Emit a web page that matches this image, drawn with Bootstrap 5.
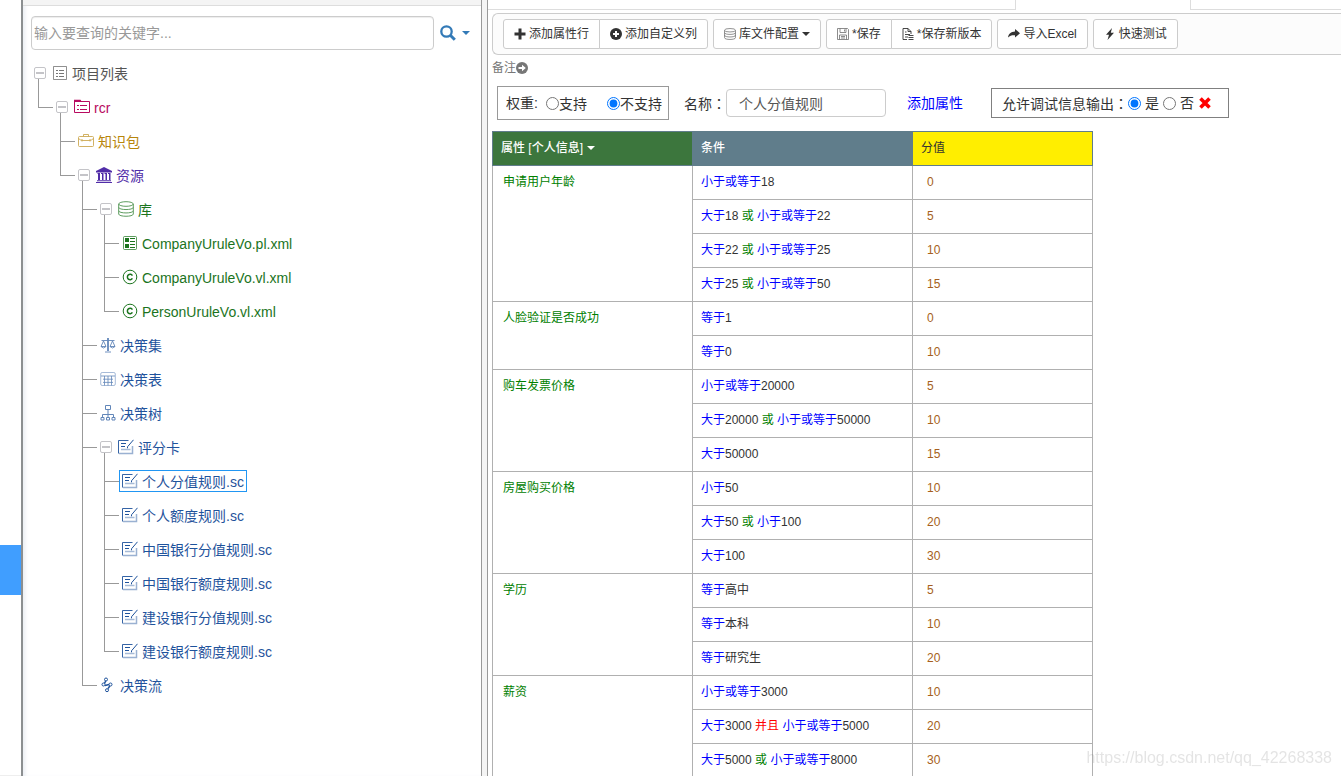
<!DOCTYPE html>
<html lang="zh-CN">
<head>
<meta charset="utf-8">
<meta name="viewport" content="width=device-width, initial-scale=1">
<title>个人分值规则</title>
<link href="https://cdn.jsdelivr.net/npm/bootstrap@5.3.0/dist/css/bootstrap.min.css" rel="stylesheet">
<style>
  body { font-family: "Liberation Sans", "Noto Sans CJK SC", sans-serif; font-size: 14px; line-height: 20px; color: #333; background: #fff; }
  svg { display: block; flex: none; }
  .ic { width: 16px; height: 16px; fill: none; stroke: currentColor; stroke-width: 1; }
  .ic-sm { width: 12px; height: 12px; fill: none; stroke: currentColor; stroke-width: 1; }
  .tri { width: 8px; height: 4px; fill: currentColor; }
  .soft { opacity: .7; }
  .colon { font-family: "Noto Sans CJK TC", sans-serif; }

  /* outer navigation strip */
  .rail { width: 21px; flex: none; padding-top: 545px; border-bottom: 1px solid #eee; }
  .rail-active { height: 50px; background: #409eff; }

  /* project tree pane */
  .side { width: 460px; flex: none; border-left: 2px solid #8c8f91; box-shadow: inset 4px 0 4px -2px #e9ecf2; }
  .side-head { height: 6px; background: #f4f4f4; border-bottom: 1px solid #ddd; }
  .search { padding: 10px 11px 0 8px; gap: 6px; }
  .search .form-control { height: 34px; padding: 6px 2px; font-size: 14px; line-height: 20px; border-color: #ccc; border-radius: 4px; box-shadow: inset 0 1px 1px rgba(0,0,0,.075); }
  .search .form-control::placeholder { color: #999; }
  .search-btn { color: #337ab7; gap: 6px; }
  .tree, .tree ul { list-style: none; margin: 0; padding: 0; }
  .tree { padding: 6px 0 0 11px; }
  .tree ul { padding-left: 22px; }
  .tree li { position: relative; }
  .node { height: 34px; display: flex; align-items: center; gap: 6px; }
  .node a { display: flex; align-items: flex-start; gap: 4px; height: 16px; line-height: 18px; color: inherit; text-decoration: none; white-space: nowrap; }
  .node a.chosen { outline: 1px solid #2196f3; outline-offset: 2px; }
  .fold { width: 12px; height: 12px; padding: 0; border: 1px solid #c4c4c8; border-radius: 2px; background: #fff; display: flex; align-items: center; justify-content: center; position: relative; z-index: 1; }
  .fold::before { content: ""; width: 8px; height: 2px; background: #c4c4c8; }
  /* connector lines between parent and children */
  .tree ul > li::before { content: ""; position: absolute; left: -18px; top: -11px; width: 15px; height: 29px; border-left: 1px solid #999; border-bottom: 1px solid #999; }
  .tree ul > li:not(:last-child)::after { content: ""; position: absolute; left: -18px; top: 0; bottom: 0; border-left: 1px solid #999; }
  .c-root { color: #555; } .c-proj { color: #b80a60; } .c-pack { color: #b8860b; } .c-res { color: #512da8; }
  .c-lib { color: #1b741d; } .c-rule { color: #1f539c; }

  .splitter { width: 7px; flex: none; background: #f4f4f4; border-left: 1px solid #999; border-right: 1px solid #999; }

  /* editor */
  .tabs { height: 10px; }
  .tab-a { flex: 0 0 528px; border-right: 1px solid #ddd; border-bottom: 1px solid #ddd; }
  .tab-b { flex: 0 0 174px; }
  .tab-c { flex: 1; border-left: 1px solid #ddd; border-bottom: 1px solid #ddd; }
  .tools { margin: 3px 0 0 4px; padding: 5px 10px; gap: 5px; height: 42px; border: 1px solid #ccc; border-right: 0; border-radius: 6px 0 0 6px; background: #fcfcfc; }
  .tools .btn { --bs-btn-border-color: #ccc; --bs-btn-bg: #fff; --bs-btn-color: #333; --bs-btn-hover-bg: #e6e6e6; --bs-btn-hover-border-color: #adadad; --bs-btn-hover-color: #333; height: 30px; padding: 0 10px; font-size: 12px; line-height: 18px; border-radius: 3px; display: flex; align-items: center; gap: 3px; white-space: nowrap; }
  .note { margin: 4px 0 0 4px; height: 18px; line-height: 18px; font-size: 12px; color: #777; }
  .props { margin: 9px 0 0 9px; white-space: nowrap; }
  .frame { border: 1px solid #999; }
  .frame input { margin: 0; width: 13px; height: 13px; }
  .frame-w { width: 172px; height: 34px; padding: 0 8px; }
  .frame-w label { padding-top: 2px; }
  .frame-d { width: 238px; height: 30px; padding: 0 10px; border-color: #808080; margin-left: 28px; }
  .frame-d label { margin: 0 4px; }
  .name-label { margin-left: 15px; }
  .name-in { width: 160px; height: 28px; padding: 4px 12px; font-size: 14px; line-height: 20px; color: #555; border-color: #ccc; border-radius: 4px; }
  .add-link { color: #00f; text-decoration: none; margin-left: 21px; }
  .drop { color: red; margin-left: 1px; }

  .grid-wrap { margin: 11px 0 0 4px; }
  .score { width: 601px; table-layout: fixed; border-collapse: collapse; font-size: 12px; line-height: 18px; }
  .score th, .score td { height: 34px; padding: 7px 8px 8px; border: 1px solid #b0b0b0; vertical-align: top; font-weight: 400; }
  .score th { border-color: #607d8b; color: #fff; }
  .score .h-attr { background: #3c763d; font-weight: 500; } .score .h-cond { background: #607d8b; font-weight: 500; } .score .h-val { background: #ffee00; color: #333; }
  .score td.attr { padding-left: 10px; color: green; }
  .score td.val { padding-left: 14px; color: #a65f20; }
  .score b { font-weight: 400; color: #00f; }
  .score i { font-style: normal; color: green; }
  .score i.and { color: red; }

  .stamp { position: fixed; right: 9px; bottom: 8px; font-size: 16px; line-height: 20px; color: rgba(120,120,120,.2); pointer-events: none; }
</style>
</head>
<body>
<svg class="d-none" aria-hidden="true">
  <symbol id="i-list" viewBox="0 0 16 16"><path d="M1.500 1.500h13v13h-13z" opacity=".65"/><path d="M4 5.500h2M4 8.500h2M4 11.500h2M7 5.500h5M7 8.500h5M7 11.500h5" opacity=".8"/></symbol>
  <symbol id="i-proj" viewBox="0 0 16 16"><path d="M.5 13.500v-11h15v11z"/><path d="M0 3V.8h6.500L8 3z" fill="currentColor" stroke="none"/><path d="M3 6.500h2M3 10.500h2M6 6.500h7M6 10.500h7"/></symbol>
  <symbol id="i-case" viewBox="0 0 16 16"><path d="M.5 4.500q0-1 1-1h13q1 0 1 1v8q0 1-1 1h-13q-1 0-1-1zM5.500 3.500v-2h5v2M.5 5.500Q3 7.500 4 7.500h8q1 0 3.500-2M4 6v2.500M12 6v2.500" stroke-width=".9"/></symbol>
  <symbol id="i-bank" viewBox="0 0 16 16"><path d="M8 0 16 4v1.500H0V4zM1.500 6h2.500v7H2V7h-.5zM5 6h2.500v7h-1.500V7H5zM8.500 6H11v7H9.500V7h-1zM12 6h2.500v7H13V7h-1zM1 13.300h14v1H1zM0 15h16v1H0z" fill="currentColor" stroke="none"/></symbol>
  <symbol id="i-db" viewBox="0 0 16 16"><ellipse cx="8" cy="3" rx="7.300" ry="2.300"/><path d="M.7 3v10c0 3 14.600 3 14.600 0V3M.7 6.300c0 3 14.600 3 14.600 0M.7 9.700c0 3 14.600 3 14.600 0"/></symbol>
  <symbol id="i-pl" viewBox="0 0 16 16"><rect x="1.500" y="1.500" width="13" height="13" rx="1" opacity=".7"/><path d="M3 3h4v4H3zM3 9h4v4H3z" fill="currentColor" stroke="none"/><path d="M8 3.500h5M8 6.500h5M8 9.500h5M8 12.500h5"/></symbol>
  <symbol id="i-copy" viewBox="0 0 16 16"><circle cx="8" cy="8" r="6.800"/><path d="M10.400 6.600A2.700 2.700 0 1 0 10.400 9.400" stroke-width="1.500"/></symbol>
  <symbol id="i-scale" viewBox="0 0 16 16"><path d="M1.500 3.500h13M7.500 1v13M8.500 1v13M5 15h6M3.500 4 1 9.500h5zM12.500 4 10 9.500h5zM1 9.500q2.500 3 5 0M10 9.500q2.500 3 5 0" stroke-width=".9"/></symbol>
  <symbol id="i-table" viewBox="0 0 16 16"><g stroke-width=".8"><rect x=".7" y="1.500" width="14.600" height="13" rx="1.500" opacity=".7"/><path d="M1 5h14M3 8.200h10M3 11.400h10M4.500 5v9.500M8 5v9.500M11.500 5v9.500"/></g></symbol>
  <symbol id="i-org" viewBox="0 0 16 16"><path d="M5.500.5h5v4h-5zM8 4.500V12M2.500 12V9.500h11V12M1 12.500h3v2.500H1zM6.500 12.500h3v2.500h-3zM12 12.500h3v2.500h-3z"/></symbol>
  <symbol id="i-card" viewBox="0 0 16 16"><path d="M10.500 1.500h-10v13" opacity=".9"/><path d="M1 14.500h13.500V7" stroke-width="1.500" opacity=".45"/><path d="M15.500.8 9.500 7.800v1.500M3 4.500h5M3 7.500h4"/><path d="M3 10.500h9.500" stroke-width="1.500" opacity=".4"/></symbol>
  <symbol id="i-flow" viewBox="0 0 16 16"><circle cx="6" cy="2.500" r="1.500"/><circle cx="3.500" cy="7.500" r="1.500"/><circle cx="10.500" cy="7.500" r="1.500"/><circle cx="7" cy="13.200" r="1.500"/><path d="M5.700 4 4.500 6.300M5 8.500 9 7.500M9.800 9 8 11.700" stroke-width="1.500"/></symbol>
  <symbol id="i-find" viewBox="0 0 16 16"><circle cx="6.500" cy="6.500" r="5.200" stroke-width="2.300"/><path d="m10.300 10.300 4.500 4.500" stroke-width="3"/></symbol>
  <symbol id="i-tri" viewBox="0 0 8 4"><path d="M0 0h8L4 4z"/></symbol>
  <symbol id="i-plus" viewBox="0 0 12 12"><path d="M6 .5v11M.5 6h11" stroke-width="3"/></symbol>
  <symbol id="i-pluso" viewBox="0 0 12 12"><circle cx="6" cy="6" r="6" fill="currentColor" stroke="none"/><path d="M6 3v6M3 6h6" stroke="#fff" stroke-width="2"/></symbol>
  <symbol id="i-save" viewBox="0 0 12 12"><path d="M.5.500h10l1 1v10H.5zM3 .5v4h6v-4M2.500 11.500V7h7v4.500M4 8.500h4M4 10h4M7.500 1.500v2" stroke-width=".8"/></symbol>
  <symbol id="i-new" viewBox="0 0 12 12"><path d="M5 11.500H1V.5h5l3 3V6M6 .5v3h3M3 4h1.500M3 6.500h5M3 9h3M6.500 7.500h5M6.500 9.500h5M6.500 11.500h5" stroke-width=".9"/></symbol>
  <symbol id="i-share" viewBox="0 0 12 12"><path d="M7 1 12 5.200 7 9.500V7.200C4 7 2 7.500 0 9.500 .5 5.500 3 3.600 7 3.400z" fill="currentColor" stroke="none"/></symbol>
  <symbol id="i-bolt" viewBox="0 0 12 12"><path d="M8 0 2 6.800h3L3.500 12 10 4.800H6.800z" fill="currentColor" stroke="none"/></symbol>
  <symbol id="i-next" viewBox="0 0 12 12"><circle cx="6" cy="6" r="6" fill="currentColor" stroke="none"/><path d="M2.500 5h3.500V2.800L9.800 6 6 9.200V7H2.500z" fill="#fff" stroke="none"/></symbol>
  <symbol id="i-x" viewBox="0 0 12 12"><path d="m1.500 1.500 9 9M10.500 1.500l-9 9" stroke-width="3.600"/></symbol>
</svg>

<div class="d-flex vh-100 overflow-hidden">
  <nav class="rail"><div class="rail-active"></div></nav>

  <aside class="side">
    <div class="side-head"></div>
    <form class="search d-flex align-items-center">
      <input type="text" class="form-control flex-grow-1" placeholder="输入要查询的关键字..." aria-label="输入要查询的关键字">
      <button type="button" class="btn p-0 border-0 d-flex align-items-center search-btn" aria-label="查询"><svg class="ic"><use href="#i-find"/></svg><svg class="tri"><use href="#i-tri"/></svg></button>
    </form>
    <ul class="tree">
      <li>
        <div class="node c-root"><button class="fold" aria-label="折叠"></button><a href="#"><svg class="ic"><use href="#i-list"/></svg>项目列表</a></div>
        <ul>
          <li>
            <div class="node c-proj"><button class="fold" aria-label="折叠"></button><a href="#"><svg class="ic"><use href="#i-proj"/></svg>rcr</a></div>
            <ul>
              <li><div class="node c-pack"><a href="#"><svg class="ic soft"><use href="#i-case"/></svg>知识包</a></div></li>
              <li>
                <div class="node c-res"><button class="fold" aria-label="折叠"></button><a href="#"><svg class="ic"><use href="#i-bank"/></svg>资源</a></div>
                <ul>
                  <li>
                    <div class="node c-lib"><button class="fold" aria-label="折叠"></button><a href="#"><svg class="ic soft"><use href="#i-db"/></svg>库</a></div>
                    <ul>
                      <li><div class="node c-lib"><a href="#"><svg class="ic"><use href="#i-pl"/></svg>CompanyUruleVo.pl.xml</a></div></li>
                      <li><div class="node c-lib"><a href="#"><svg class="ic"><use href="#i-copy"/></svg>CompanyUruleVo.vl.xml</a></div></li>
                      <li><div class="node c-lib"><a href="#"><svg class="ic"><use href="#i-copy"/></svg>PersonUruleVo.vl.xml</a></div></li>
                    </ul>
                  </li>
                  <li><div class="node c-rule"><a href="#"><svg class="ic soft"><use href="#i-scale"/></svg>决策集</a></div></li>
                  <li><div class="node c-rule"><a href="#"><svg class="ic soft"><use href="#i-table"/></svg>决策表</a></div></li>
                  <li><div class="node c-rule"><a href="#"><svg class="ic soft"><use href="#i-org"/></svg>决策树</a></div></li>
                  <li>
                    <div class="node c-rule"><button class="fold" aria-label="折叠"></button><a href="#"><svg class="ic"><use href="#i-card"/></svg>评分卡</a></div>
                    <ul>
                      <li><div class="node c-rule"><a href="#" class="chosen"><svg class="ic"><use href="#i-card"/></svg>个人分值规则.sc</a></div></li>
                      <li><div class="node c-rule"><a href="#"><svg class="ic"><use href="#i-card"/></svg>个人额度规则.sc</a></div></li>
                      <li><div class="node c-rule"><a href="#"><svg class="ic"><use href="#i-card"/></svg>中国银行分值规则.sc</a></div></li>
                      <li><div class="node c-rule"><a href="#"><svg class="ic"><use href="#i-card"/></svg>中国银行额度规则.sc</a></div></li>
                      <li><div class="node c-rule"><a href="#"><svg class="ic"><use href="#i-card"/></svg>建设银行分值规则.sc</a></div></li>
                      <li><div class="node c-rule"><a href="#"><svg class="ic"><use href="#i-card"/></svg>建设银行额度规则.sc</a></div></li>
                    </ul>
                  </li>
                  <li><div class="node c-rule"><a href="#"><svg class="ic"><use href="#i-flow"/></svg>决策流</a></div></li>
                </ul>
              </li>
            </ul>
          </li>
        </ul>
      </li>
    </ul>
  </aside>

  <div class="splitter"></div>

  <main class="flex-grow-1 overflow-hidden">
    <div class="tabs d-flex"><div class="tab-a"></div><div class="tab-b"></div><div class="tab-c"></div></div>
    <div class="tools d-flex">
      <div class="btn-group">
        <button type="button" class="btn"><svg class="ic-sm"><use href="#i-plus"/></svg>添加属性行</button>
        <button type="button" class="btn"><svg class="ic-sm"><use href="#i-pluso"/></svg>添加自定义列</button>
      </div>
      <button type="button" class="btn"><svg class="ic-sm soft"><use href="#i-db"/></svg>库文件配置<svg class="tri"><use href="#i-tri"/></svg></button>
      <div class="btn-group">
        <button type="button" class="btn"><svg class="ic-sm soft"><use href="#i-save"/></svg>*保存</button>
        <button type="button" class="btn"><svg class="ic-sm"><use href="#i-new"/></svg>*保存新版本</button>
      </div>
      <button type="button" class="btn"><svg class="ic-sm"><use href="#i-share"/></svg>导入Excel</button>
      <button type="button" class="btn"><svg class="ic-sm"><use href="#i-bolt"/></svg>快速测试</button>
    </div>
    <div class="note d-flex align-items-center">备注<svg class="ic-sm"><use href="#i-next"/></svg></div>

    <form class="props d-flex align-items-center">
      <div class="frame frame-w d-flex align-items-center">
        <span class="me-2">权重:</span>
        <input type="radio" name="w" id="w1"><label for="w1" class="me-3 pe-1">支持</label>
        <input type="radio" name="w" id="w2" checked><label for="w2">不支持</label>
      </div>
      <label for="nm" class="name-label">名称<span class="colon" lang="zh-TW">：</span></label>
      <input type="text" id="nm" class="form-control name-in" value="个人分值规则">
      <a href="#" class="add-link">添加属性</a>
      <div class="frame frame-d d-flex align-items-center">
        <span>允许调试信息输出<span class="colon" lang="zh-TW">：</span></span>
        <input type="radio" name="d" id="d1" checked><label for="d1">是</label>
        <input type="radio" name="d" id="d2"><label for="d2">否</label>
        <svg class="ic-sm drop"><use href="#i-x"/></svg>
      </div>
    </form>

    <div class="grid-wrap">
      <table class="score">
        <colgroup><col style="width:200px"><col style="width:220px"><col style="width:180px"></colgroup>
        <thead>
          <tr><th class="h-attr"><div class="d-flex align-items-center gap-1">属性 [个人信息] <svg class="tri"><use href="#i-tri"/></svg></div></th><th class="h-cond">条件</th><th class="h-val">分值</th></tr>
        </thead>
        <tbody>
          <tr><td class="attr" rowspan="4">申请用户年龄</td><td><b>小于或等于</b>18</td><td class="val">0</td></tr>
          <tr><td><b>大于</b>18 <i>或</i> <b>小于或等于</b>22</td><td class="val">5</td></tr>
          <tr><td><b>大于</b>22 <i>或</i> <b>小于或等于</b>25</td><td class="val">10</td></tr>
          <tr><td><b>大于</b>25 <i>或</i> <b>小于或等于</b>50</td><td class="val">15</td></tr>
          <tr><td class="attr" rowspan="2">人脸验证是否成功</td><td><b>等于</b>1</td><td class="val">0</td></tr>
          <tr><td><b>等于</b>0</td><td class="val">10</td></tr>
          <tr><td class="attr" rowspan="3">购车发票价格</td><td><b>小于或等于</b>20000</td><td class="val">5</td></tr>
          <tr><td><b>大于</b>20000 <i>或</i> <b>小于或等于</b>50000</td><td class="val">10</td></tr>
          <tr><td><b>大于</b>50000</td><td class="val">15</td></tr>
          <tr><td class="attr" rowspan="3">房屋购买价格</td><td><b>小于</b>50</td><td class="val">10</td></tr>
          <tr><td><b>大于</b>50 <i>或</i> <b>小于</b>100</td><td class="val">20</td></tr>
          <tr><td><b>大于</b>100</td><td class="val">30</td></tr>
          <tr><td class="attr" rowspan="3">学历</td><td><b>等于</b>高中</td><td class="val">5</td></tr>
          <tr><td><b>等于</b>本科</td><td class="val">10</td></tr>
          <tr><td><b>等于</b>研究生</td><td class="val">20</td></tr>
          <tr><td class="attr" rowspan="3">薪资</td><td><b>小于或等于</b>3000</td><td class="val">10</td></tr>
          <tr><td><b>大于</b>3000 <i class="and">并且</i> <b>小于或等于</b>5000</td><td class="val">20</td></tr>
          <tr><td><b>大于</b>5000 <i>或</i> <b>小于或等于</b>8000</td><td class="val">30</td></tr>
        </tbody>
      </table>
    </div>
  </main>
</div>
<div class="stamp">https://blog.csdn.net/qq_42268338</div>
<script src="https://cdn.jsdelivr.net/npm/bootstrap@5.3.0/dist/js/bootstrap.bundle.min.js"></script>
</body>
</html>
